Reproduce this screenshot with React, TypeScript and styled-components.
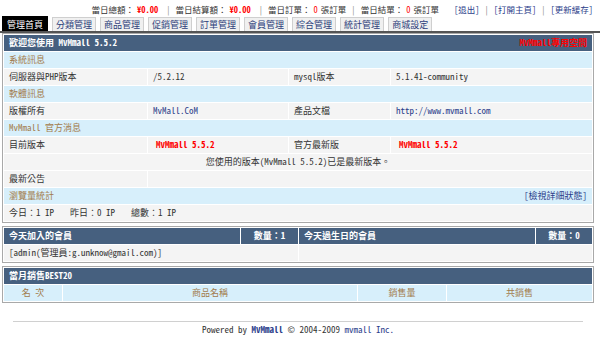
import React from 'react'
import styled, { createGlobalStyle, css } from 'styled-components'

const GlobalStyle = createGlobalStyle`
  html, body {
    margin: 0;
    padding: 0;
    background: #fff;
  }
  body {
    font-family: "Noto Sans Mono CJK TC", "Noto Sans CJK TC", "Liberation Mono", monospace;
    font-size: 9px;
    color: #333;
  }
`

const Page = styled.div`
  width: 600px;
  height: 337px;
  overflow: hidden;
`

const TopBar = styled.div`
  display: flex;
  justify-content: flex-end;
  align-items: center;
  height: 16px;
  padding: 3px 7px 1px 0;
  box-sizing: border-box;
  line-height: 12px;
  font-size: 8.5px;
  white-space: nowrap;
`

const Sep = styled.span`
  color: #888;
  margin: 0 5px;
`

const Red = styled.span<{ bold?: boolean }>`
  color: #f00;
  margin: 0 3px;
  ${p =>
    p.bold &&
    css`
      font-weight: bold;
    `}
`

const TopLink = styled.a`
  color: #2b3d8a;
  text-decoration: none;
`

const LinkGroup = styled.span`
  margin-left: 15px;
`

const TabBar = styled.div`
  display: flex;
  align-items: flex-end;
  gap: 4px;
  height: 15px;
  padding-left: 2px;
  border-bottom: 2px solid #555;
`

const Tab = styled.div<{ active?: boolean }>`
  height: 14px;
  line-height: 14px;
  padding: 0 3px;
  background: #f0f0f0;
  border: 1px solid #cfcfcf;
  border-bottom: none;
  color: #2b3d7a;
  box-sizing: border-box;

  ${p =>
    p.active &&
    css`
      height: 15px;
      line-height: 15px;
      background: #000;
      border-color: #000;
      color: #fff;
      padding: 0 4px;
    `}
`

const Panel = styled.div<{ top?: number }>`
  width: 592px;
  margin: ${p => p.top ?? 3}px 0 0 2px;
  border: 1px solid #a9a9a9;
  box-sizing: border-box;
  background: #fff;
`

const Table = styled.table`
  width: 100%;
  table-layout: fixed;
  border-collapse: separate;
  border-spacing: 1px;
  background: #fff;
`

const cellBase = css<{ align?: string }>`
  height: 16px;
  line-height: 16px;
  padding: 0 5px;
  text-align: ${p => p.align || 'left'};
  white-space: nowrap;
  overflow: hidden;
`

const HeadCell = styled.td<{ align?: string }>`
  ${cellBase}
  background: #46607f;
  color: #fff;
  font-weight: bold;
`

const HeadRight = styled.span`
  float: right;
  color: #f00;
  font-weight: bold;
`

const SectionCell = styled.td<{ align?: string }>`
  ${cellBase}
  background: #d7effb;
  color: #a27b4c;
`

const Cell = styled.td<{ align?: string }>`
  ${cellBase}
  background: #f4f4f4;
  color: #333;
`

const SideLink = styled.a`
  float: right;
  color: #2b3d8a;
  text-decoration: none;
`

const BlueText = styled.span<{ bold?: boolean }>`
  color: #2b3d8a;
  font-weight: ${p => (p.bold ? 'bold' : 'normal')};
`

const Stat = styled.span`
  margin-right: 16px;
`

const Footer = styled.div`
  width: 570px;
  margin: 18px 0 0 13px;
  border-top: 1px solid #d0d0d0;
  padding-top: 1px;
  line-height: 13px;
  text-align: center;
  color: #333;
`

const tabs = ['分類管理', '商品管理', '促銷管理', '訂單管理', '會員管理', '綜合管理', '統計管理', '商城設定']

export default function App() {
  return (
    <Page>
      <GlobalStyle />
      <TopBar>
        當日總額：<Red bold>¥0.00</Red>
        <Sep>|</Sep>
        當日結算額：<Red bold>¥0.00</Red>
        <Sep>|</Sep>
        當日訂單：<Red>0</Red>張訂單
        <Sep>|</Sep>
        當日結單：<Red>0</Red>張訂單
        <LinkGroup>
          <TopLink href="#">[退出]</TopLink>
          <Sep>|</Sep>
          <TopLink href="#">[打開主頁]</TopLink>
          <Sep>|</Sep>
          <TopLink href="#">[更新緩存]</TopLink>
        </LinkGroup>
      </TopBar>

      <TabBar>
        <Tab active>管理首頁</Tab>
        {tabs.map(t => (
          <Tab key={t}>{t}</Tab>
        ))}
      </TabBar>

      <Panel top={0}>
        <Table>
          <colgroup>
            <col style={{ width: 143 }} />
            <col style={{ width: 140 }} />
            <col style={{ width: 101 }} />
            <col />
          </colgroup>
          <tbody>
            <tr>
              <HeadCell colSpan={4}>
                歡迎您使用 MvMmall 5.5.2
                <HeadRight>MvMmall專用空間</HeadRight>
              </HeadCell>
            </tr>
            <tr>
              <SectionCell colSpan={4}>系統訊息</SectionCell>
            </tr>
            <tr>
              <Cell>伺服器與PHP版本</Cell>
              <Cell>/5.2.12</Cell>
              <Cell>mysql版本</Cell>
              <Cell>5.1.41-community</Cell>
            </tr>
            <tr>
              <SectionCell colSpan={4}>軟體訊息</SectionCell>
            </tr>
            <tr>
              <Cell>版權所有</Cell>
              <Cell>
                <BlueText>MvMall.CoM</BlueText>
              </Cell>
              <Cell>產品文檔</Cell>
              <Cell>
                <BlueText>http://www.mvmall.com</BlueText>
              </Cell>
            </tr>
            <tr>
              <SectionCell colSpan={4}>MvMmall 官方消息</SectionCell>
            </tr>
            <tr>
              <Cell>目前版本</Cell>
              <Cell>
                <Red bold>MvMmall 5.5.2</Red>
              </Cell>
              <Cell>官方最新版</Cell>
              <Cell>
                <Red bold>MvMmall 5.5.2</Red>
              </Cell>
            </tr>
            <tr>
              <Cell colSpan={4} align="center">
                您使用的版本(MvMmall 5.5.2)已是最新版本。
              </Cell>
            </tr>
            <tr>
              <Cell>最新公告</Cell>
              <Cell colSpan={3}></Cell>
            </tr>
            <tr>
              <SectionCell colSpan={4}>
                瀏覽量統計
                <SideLink href="#">[檢視詳細狀態]</SideLink>
              </SectionCell>
            </tr>
            <tr>
              <Cell colSpan={4}>
                <Stat>今日：1 IP</Stat>
                <Stat>昨日：0 IP</Stat>
                <Stat>總數：1 IP</Stat>
              </Cell>
            </tr>
          </tbody>
        </Table>
      </Panel>

      <Panel>
        <Table>
          <colgroup>
            <col style={{ width: 236 }} />
            <col style={{ width: 57 }} />
            <col style={{ width: 236 }} />
            <col />
          </colgroup>
          <tbody>
            <tr>
              <HeadCell>今天加入的會員</HeadCell>
              <HeadCell align="center">數量：1</HeadCell>
              <HeadCell>今天過生日的會員</HeadCell>
              <HeadCell align="center">數量：0</HeadCell>
            </tr>
            <tr>
              <Cell colSpan={2}>[admin(管理員:g.unknow@gmail.com)]</Cell>
              <Cell colSpan={2}></Cell>
            </tr>
          </tbody>
        </Table>
      </Panel>

      <Panel>
        <Table>
          <colgroup>
            <col style={{ width: 58 }} />
            <col style={{ width: 294 }} />
            <col style={{ width: 88 }} />
            <col />
          </colgroup>
          <tbody>
            <tr>
              <HeadCell colSpan={4}>當月銷售BEST20</HeadCell>
            </tr>
            <tr>
              <SectionCell align="center">名 次</SectionCell>
              <SectionCell align="center">商品名稱</SectionCell>
              <SectionCell align="center">銷售量</SectionCell>
              <SectionCell align="center">共銷售</SectionCell>
            </tr>
          </tbody>
        </Table>
      </Panel>

      <Footer>
        Powered by <BlueText bold>MvMmall</BlueText> © 2004-2009 <BlueText>mvmall Inc.</BlueText>
      </Footer>
    </Page>
  )
}
